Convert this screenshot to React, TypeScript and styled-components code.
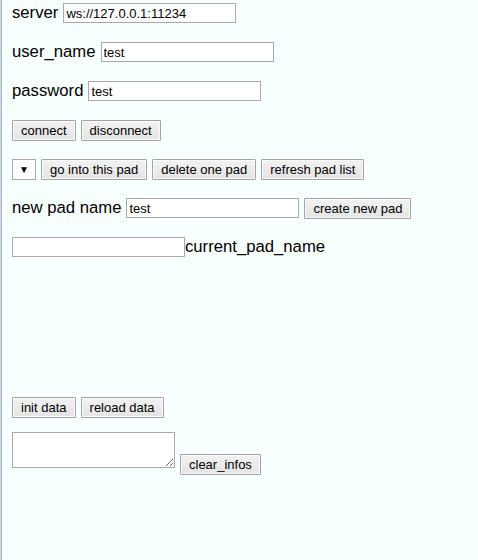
import React from "react";
import styled, { createGlobalStyle } from "styled-components";

const GlobalStyle = createGlobalStyle`
  html, body {
    margin: 0;
    padding: 0;
    background: #f8ffff;
    min-height: 100%;
  }
  body {
    font-family: "Liberation Sans", Arial, sans-serif;
    color: #000;
  }
`;

const Page = styled.div`
  min-height: 560px;
  box-sizing: border-box;
  border-left: 1px solid #cdd8e2;
  box-shadow: inset 1px 0 0 #a9b7c5;
  padding: 3px 0 0 11px;
  display: flex;
  flex-direction: column;
  gap: 19px;
`;

const Row = styled.div<{ $top?: number }>`
  display: flex;
  align-items: center;
  height: 20px;
  gap: 5px;
  margin-top: ${(p) => p.$top ?? 0}px;
`;

const Label = styled.span<{ $pull?: number }>`
  font-size: 16.7px;
  line-height: 20px;
  white-space: nowrap;
  margin-left: ${(p) => p.$pull ?? 0}px;
`;

const TextInput = styled.input<{ $w?: number }>`
  box-sizing: border-box;
  width: ${(p) => p.$w ?? 173}px;
  height: 20px;
  border: 1px solid #a9a9a9;
  background: #fff;
  font-family: "Liberation Sans", Arial, sans-serif;
  font-size: 13px;
  padding: 0 2px;
  margin: 0;
  color: #000;
  outline: none;
`;

const Button = styled.button`
  box-sizing: border-box;
  height: 21px;
  padding: 0 8px;
  margin: 0;
  border: 1px solid #a3a3a3;
  border-radius: 1px;
  background: linear-gradient(#f2f2f2, #e4e4e4);
  box-shadow: inset 0 0 0 1px #fafafa;
  font-family: "Liberation Sans", Arial, sans-serif;
  font-size: 13px;
  color: #000;
  white-space: nowrap;
  line-height: 19px;
`;

const SelectBox = styled.div`
  box-sizing: border-box;
  width: 24px;
  height: 21px;
  border: 1px solid #a9a9a9;
  background: #fff;
  display: flex;
  align-items: center;
  justify-content: center;
  font-size: 10px;
  color: #000;
`;

const InfoRow = styled.div`
  display: flex;
  align-items: flex-start;
  gap: 5px;
  margin-top: -4px;
`;

const InfoArea = styled.textarea`
  box-sizing: border-box;
  width: 163px;
  height: 36px;
  border: 1px solid #a9a9a9;
  background: #fff;
  margin: 0;
  padding: 2px;
  font-family: "Liberation Mono", monospace;
  font-size: 13px;
`;

const ClearButton = styled(Button)`
  margin-top: 22px;
`;

export default function App() {
  return (
    <>
      <GlobalStyle />
      <Page>
        <Row>
          <Label>server</Label>
          <TextInput defaultValue="ws://127.0.0.1:11234" />
        </Row>
        <Row>
          <Label>user_name</Label>
          <TextInput defaultValue="test" />
        </Row>
        <Row>
          <Label>password</Label>
          <TextInput defaultValue="test" />
        </Row>
        <Row>
          <Button>connect</Button>
          <Button>disconnect</Button>
        </Row>
        <Row>
          <SelectBox>▼</SelectBox>
          <Button>go into this pad</Button>
          <Button>delete one pad</Button>
          <Button>refresh pad list</Button>
        </Row>
        <Row>
          <Label>new pad name</Label>
          <TextInput defaultValue="test" />
          <Button>create new pad</Button>
        </Row>
        <Row>
          <TextInput />
          <Label $pull={-5}>current_pad_name</Label>
        </Row>
        <Row $top={121}>
          <Button>init data</Button>
          <Button>reload data</Button>
        </Row>
        <InfoRow>
          <InfoArea />
          <ClearButton>clear_infos</ClearButton>
        </InfoRow>
      </Page>
    </>
  );
}
